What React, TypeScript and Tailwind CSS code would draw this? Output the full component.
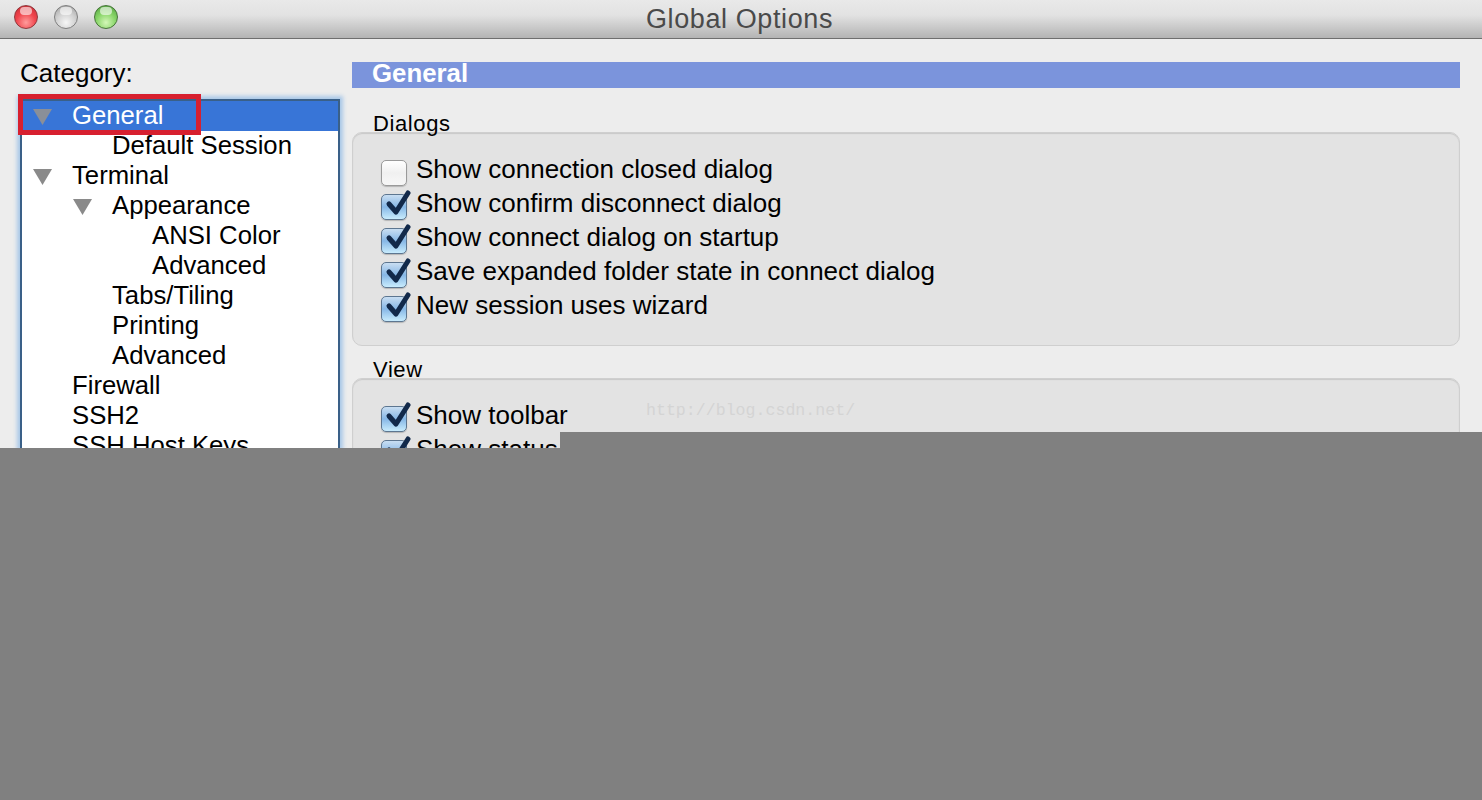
const sans = 'font-["Liberation_Sans",Arial,sans-serif]';

const treeRows = [
  { label: 'General', depth: 0, open: true, selected: true },
  { label: 'Default Session', depth: 1 },
  { label: 'Terminal', depth: 0, open: true },
  { label: 'Appearance', depth: 1, open: true },
  { label: 'ANSI Color', depth: 2 },
  { label: 'Advanced', depth: 2 },
  { label: 'Tabs/Tiling', depth: 1 },
  { label: 'Printing', depth: 1 },
  { label: 'Advanced', depth: 1 },
  { label: 'Firewall', depth: 0 },
  { label: 'SSH2', depth: 0 },
  { label: 'SSH Host Keys', depth: 0 },
];

const dialogOptions = [
  { label: 'Show connection closed dialog', checked: false },
  { label: 'Show confirm disconnect dialog', checked: true },
  { label: 'Show connect dialog on startup', checked: true },
  { label: 'Save expanded folder state in connect dialog', checked: true },
  { label: 'New session uses wizard', checked: true },
];

const viewOptions = [
  { label: 'Show toolbar', checked: true },
  { label: 'Show status bar', checked: true },
];

function TrafficLight({ tone }: { tone: 'red' | 'gray' | 'green' }) {
  const color = {
    red: 'border-[#8e3a3e] bg-[radial-gradient(circle_at_50%_75%,#ff9c9c_0%,#f0444c_50%,#c42a33_100%)]',
    gray: 'border-[#7f7f7f] bg-[radial-gradient(circle_at_50%_75%,#f6f6f6_0%,#d0d0d0_50%,#9c9c9c_100%)]',
    green: 'border-[#47743a] bg-[radial-gradient(circle_at_50%_75%,#d4f7b8_0%,#86d466_50%,#4c9a3c_100%)]',
  }[tone];
  return (
    <div className={`relative h-[24px] w-[24px] rounded-full border ${color}`}>
      <div className="absolute left-[5px] top-[1px] h-[8px] w-[12px] rounded-full bg-white/60"></div>
    </div>
  );
}

function Triangle({ light }: { light?: boolean }) {
  return (
    <svg width="19" height="16" viewBox="0 0 19 16" className={light ? 'text-[#8a8f98]' : 'text-[#8a8a8a]'}>
      <path d="M0 0H19L9.5 16Z" fill="currentColor" />
    </svg>
  );
}

function TreeRow({ label, depth, open, selected }: { label: string; depth: number; open?: boolean; selected?: boolean }) {
  const indent = ['pl-[50px]', 'pl-[90px]', 'pl-[130px]'][depth];
  const arrow = ['left-[11px]', 'left-[51px]', 'left-[91px]'][depth];
  return (
    <div className={`relative flex h-[30px] shrink-0 items-center pb-[2px] text-[25.7px] ${indent} ${selected ? 'bg-[#3875d7] text-white' : 'text-black'}`}>
      {open && (
        <span className={`absolute top-[8px] flex ${arrow}`}>
          <Triangle light={selected} />
        </span>
      )}
      <span className="whitespace-nowrap">{label}</span>
    </div>
  );
}

function CheckBox({ checked }: { checked: boolean }) {
  return (
    <div
      className={`relative h-[26px] w-[26px] shrink-0 rounded-[5px] border shadow-[0_1px_1px_rgba(0,0,0,0.2)] ${
        checked
          ? 'border-[#5d7690] bg-[linear-gradient(#c9def2_0%,#86b7e6_50%,#c8ecfd_100%)]'
          : 'border-[#9a9a9a] bg-[linear-gradient(#ffffff_0%,#f0f0f0_50%,#f7f7f7_100%)]'
      }`}
    >
      {checked && (
        <svg width="30" height="34" viewBox="0 0 30 34" className="absolute -top-[10px] left-0">
          <path d="M7 19L14 27L26 8" fill="none" stroke="#12294a" strokeWidth="5" strokeLinecap="round" strokeLinejoin="round" />
        </svg>
      )}
    </div>
  );
}

function OptionRow({ label, checked }: { label: string; checked: boolean }) {
  return (
    <div className="flex h-[34px] shrink-0 items-center gap-[9px] pl-[28px] text-[26px] text-black">
      <div className="mt-[6px]">
        <CheckBox checked={checked} />
      </div>
      <span className="-mt-[2px] whitespace-nowrap">{label}</span>
    </div>
  );
}

function GroupLabel({ children }: { children: string }) {
  return (
    <div className="ml-[20px] h-[24px] w-fit bg-[#ededed] px-[1px] text-[22px] leading-[24px] tracking-[0.6px] text-black">
      {children}
    </div>
  );
}

export default function App() {
  return (
    <div className={`relative h-[800px] w-[1482px] overflow-hidden bg-[#ededed] ${sans}`}>
      <div className="relative flex h-[39px] items-center justify-center border-b border-[#6f6f6f] bg-[linear-gradient(#e9e9e9,#e2e2e2_40%,#b4b4b4)]">
        <div className="absolute left-[14px] top-[5px] flex gap-[16px]">
          <TrafficLight tone="red" />
          <TrafficLight tone="gray" />
          <TrafficLight tone="green" />
        </div>
        <span className="-ml-[3px] text-[27px] tracking-[0.6px] text-[#4a4a4a]">Global Options</span>
      </div>

      <div className="flex h-[409px] overflow-hidden">
        <div className="flex w-[352px] shrink-0 flex-col pl-[20px] pr-[12px] pt-[4px]">
          <div className="mt-[15px] h-[41px] shrink-0 text-[26px] leading-[30px] text-black">Category:</div>
          <div className="flex w-[320px] flex-1 flex-col overflow-hidden border-x-2 border-t-2 border-[#3a6088] bg-white shadow-[0_0_4px_3px_#a9c8e8]">
            {treeRows.map((row, i) => (
              <TreeRow key={i} {...row} />
            ))}
          </div>
        </div>

        <div className="flex w-[1108px] shrink-0 flex-col">
          <div className="mt-[23px] flex h-[26px] shrink-0 items-center bg-[#7b94dc] pb-[4px] pl-[20px] text-[25.8px] font-bold text-white">
            General
          </div>

          <div className="mt-[24px]">
            <GroupLabel>Dialogs</GroupLabel>
            <div className="-mt-[4px] flex h-[214px] flex-col rounded-[10px] border border-[#cfcfcf] bg-[#e3e3e3] pt-[20px] shadow-[inset_0_1px_1px_rgba(0,0,0,0.12)]">
              {dialogOptions.map((opt) => (
                <OptionRow key={opt.label} {...opt} />
              ))}
            </div>
          </div>

          <div className="mt-[12px]">
            <GroupLabel>View</GroupLabel>
            <div className="-mt-[4px] flex h-[214px] flex-col rounded-[10px] border border-[#cfcfcf] bg-[#e3e3e3] pt-[20px] shadow-[inset_0_1px_1px_rgba(0,0,0,0.12)]">
              {viewOptions.map((opt) => (
                <OptionRow key={opt.label} {...opt} />
              ))}
            </div>
          </div>
        </div>
      </div>

      {/* red highlight drawn on the screenshot */}
      <div className="absolute left-[18px] top-[94px] h-[41px] w-[183px] border-[5px] border-[#d7202f]"></div>

      {/* watermark */}
      <div className="absolute left-[646px] top-[401px] font-['Liberation_Mono',monospace] text-[16.6px] leading-[20px] text-[#d4d4d4]">
        http://blog.csdn.net/
      </div>

      {/* gray masks over the rest of the picture */}
      <div className="absolute left-[560px] right-0 top-[432px] h-[16px] bg-[#808080]"></div>
      <div className="absolute bottom-0 left-0 right-0 top-[448px] bg-[#808080]"></div>
    </div>
  );
}
